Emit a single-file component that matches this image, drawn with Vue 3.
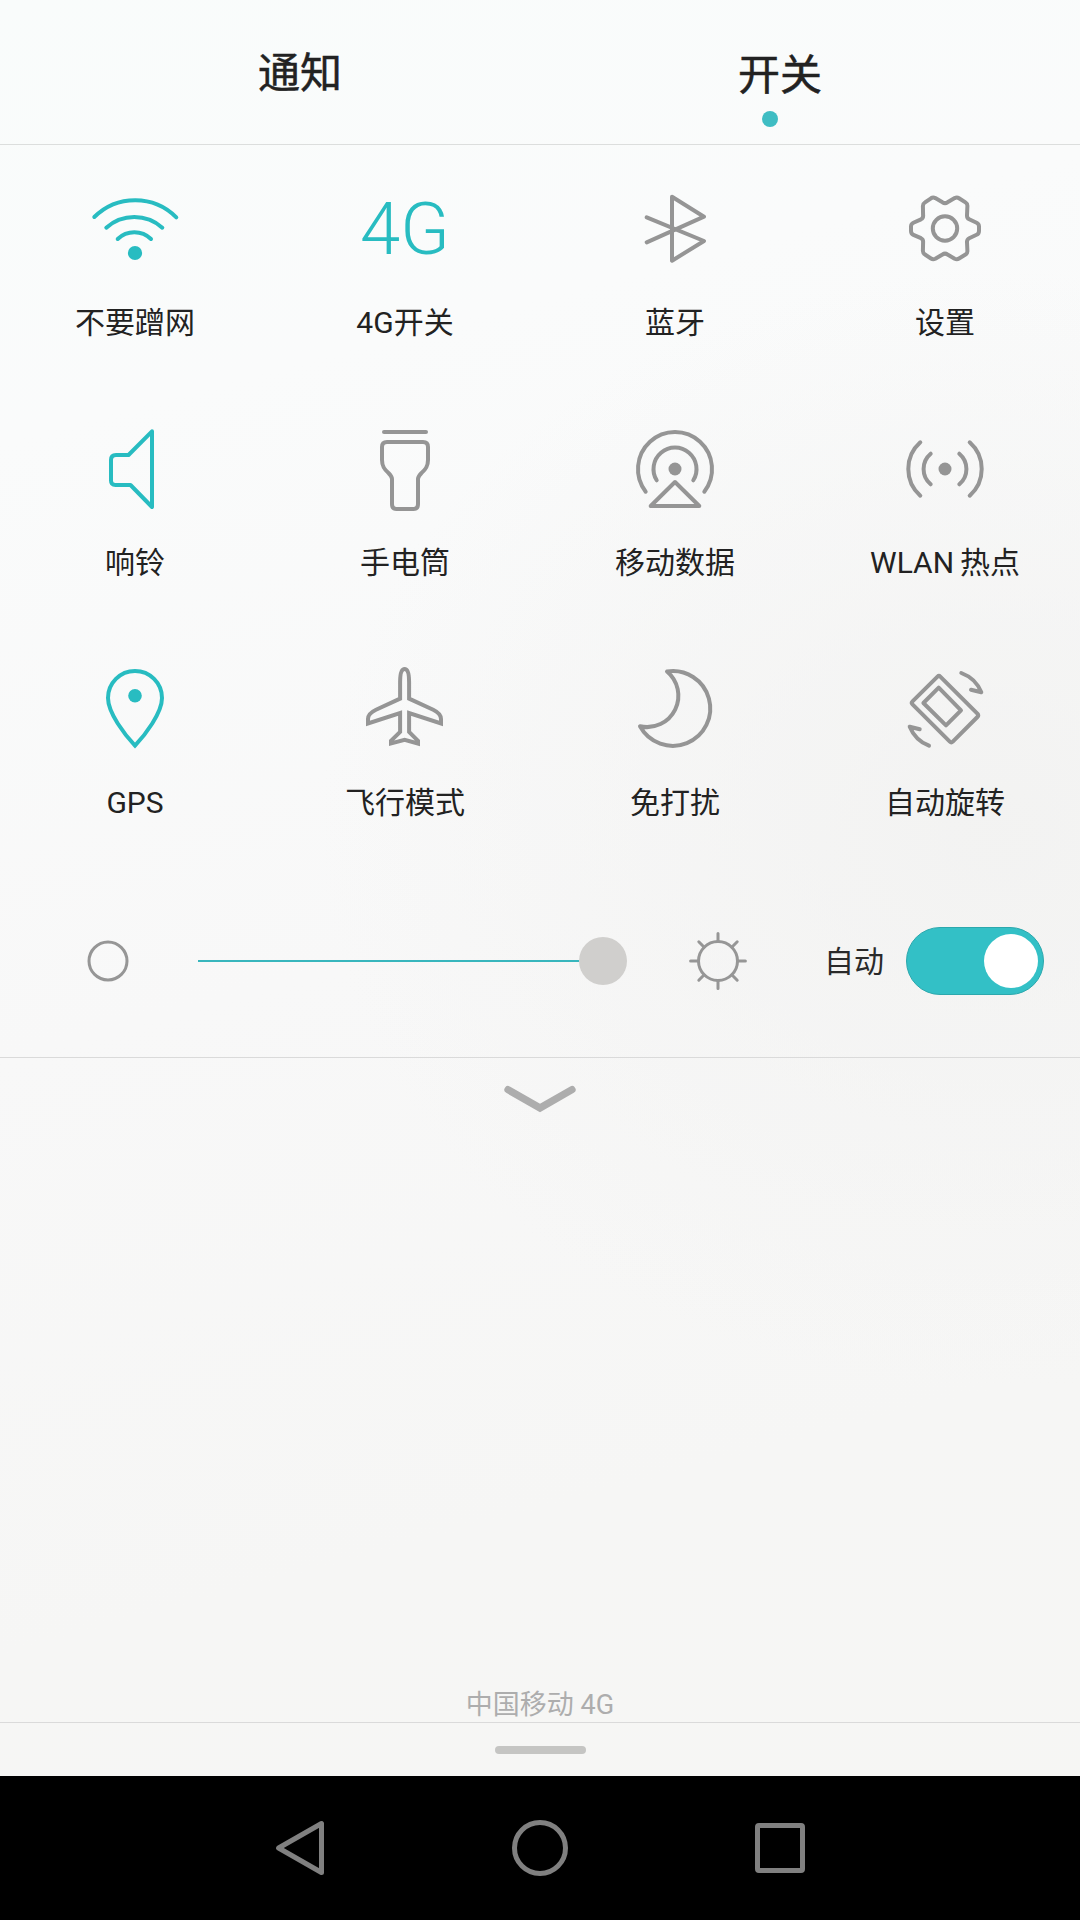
<script setup>
const tiles = [
  { id: 'wifi', label: '不要蹭网', on: true },
  { id: 'lte', label: '4G开关', on: true },
  { id: 'bluetooth', label: '蓝牙' },
  { id: 'settings', label: '设置' },
  { id: 'sound', label: '响铃', on: true },
  { id: 'torch', label: '手电筒' },
  { id: 'data', label: '移动数据' },
  { id: 'hotspot', label: 'WLAN 热点' },
  { id: 'gps', label: 'GPS', on: true },
  { id: 'airplane', label: '飞行模式' },
  { id: 'dnd', label: '免打扰' },
  { id: 'rotate', label: '自动旋转' },
]

const shapes = {
  wifi: {
    lines: ['M9.3 38A58 58 0 0 1 91.3 38.3', 'M21.3 48.7A42 42 0 0 1 77.3 48.7', 'M32.7 60A24 24 0 0 1 66 60'],
    dot: [50, 74, 7.1],
  },
  bluetooth: { lines: ['M21.7 38.3L79 62L47 81.7V17.7L79 37.7L21.7 63.3'] },
  settings: {
    lines: [
      'M16 47.5Q16 44.8 18.4 43.7L26 40.3Q28.3 39.2 28.1 36.5L27.9 27Q28 24.6 30 23.4L36 19.3Q38 18 40.3 19.1L47.5 23.3Q50 25 52.5 23.3L59.7 19.1Q62 18 64 19.3L70.5 23.4Q72.5 24.6 72.4 27L72 36.5Q71.9 39.2 74.2 40.3L81.6 43.7Q84 44.8 84 47.5V52Q84 54.7 81.6 55.8L74.2 59.2Q71.9 60.3 72 63L72.4 72Q72.5 74.4 70.5 75.5L64 79.5Q62 80.8 59.7 79.7L52.5 75.5Q50 73.8 47.5 75.5L40.3 79.7Q38 80.8 36 79.5L30 75.5Q28 74.4 27.9 72L28.1 63Q28.3 60.3 26 59.2L18.4 55.8Q16 54.7 16 52Z',
      'M62.2 49.5A12.2 12.2 0 1 1 37.8 49.5A12.2 12.2 0 1 1 62.2 49.5Z',
    ],
  },
  sound: { lines: ['M43.5 36H31Q26 36 26 41V61.5Q26 66 30.5 66H45.5L67 88V12.3Z'] },
  torch: {
    lines: [
      'M29 13H71',
      'M32 23H68Q73 23 73 28V41C73 48 70 51 66.5 54Q63 57.5 63 60V85Q63 90 58.5 90H41.5Q37 90 37 85V60Q37 57.5 33.5 54C30 51 27 48 27 41V28Q27 23 32 23Z',
    ],
  },
  data: {
    lines: ['M20.7 72.7A37 37 0 1 1 79.3 72.7', 'M31.7 61.3A21.5 21.5 0 1 1 68.3 61.3', 'M50 63L25.7 87H74.3Z'],
    dot: [50, 50, 6.5],
  },
  hotspot: {
    lines: [
      'M25.3 23.3A35.7 35.7 0 0 0 25.3 76.7',
      'M35.7 34.7A20 20 0 0 0 35.7 65.3',
      'M74.7 23.3A35.7 35.7 0 0 1 74.7 76.7',
      'M64.3 34.7A20 20 0 0 1 64.3 65.3',
    ],
    dot: [50, 50, 6.5],
  },
  gps: {
    lines: ['M50 86.6C40 76 23 54 23 39A27 27 0 0 1 77 39C77 54 60 76 50 86.6Z'],
    dot: [50, 36.7, 6.8],
    sharp: true,
  },
  airplane: {
    lines: [
      'M49.6 10C46.5 10 45.1 15 45.1 23V39.6L21 50.8Q13 54.6 13 60V64.5L45.1 54V73L36 81.8V84.5L49.6 80.8L63 84.5V81.8L54.1 73V54L86 64.5V60Q86 54.6 78.2 50.8L54.1 39.6V23C54.1 15 52.7 10 49.6 10Z',
    ],
    sharp: true,
  },
  dnd: { lines: ['M42 12.5A37.4 37.4 0 1 1 15 67.3A31.4 31.4 0 0 0 42 12.5Z'] },
  rotate: {
    lines: [
      'M42.5 17.6Q43.9 16.2 45.3 17.6L82.4 54.6Q84 56.4 82.4 58L57.8 82.6Q56.3 84 54.8 82.6L17.5 45.4Q16 43.9 17.5 42.4Z',
      'M43.7 28.7L28.4 44L51 66.3L66 51.3Z',
      'M66.3 14Q81 19.5 86.3 33.3L76 30.7',
      'M34 86.7Q20.5 81.5 14.7 67.7L24.7 70.3',
    ],
  },
}
</script>

<template>
  <div class="screen">
    <header class="tabs">
      <div class="tab notices">通知</div>
      <div class="tab switches">
        <span>开关</span>
        <i class="indicator"></i>
      </div>
    </header>

    <main class="grid">
      <div v-for="t in tiles" :key="t.id" class="tile" :class="{ on: t.on }">
        <div v-if="t.id === 'lte'" class="icon lte">4G</div>
        <svg v-else class="icon" :class="{ sharp: shapes[t.id].sharp }" viewBox="0 0 100 100">
          <path v-for="d in shapes[t.id].lines" :key="d" :d="d" />
          <circle
            v-if="shapes[t.id].dot"
            :cx="shapes[t.id].dot[0]"
            :cy="shapes[t.id].dot[1]"
            :r="shapes[t.id].dot[2]"
          />
        </svg>
        <div class="label">{{ t.label }}</div>
      </div>
    </main>

    <section class="brightness">
      <svg class="low" viewBox="0 0 44 44"><circle cx="22" cy="22" r="19" /></svg>
      <div class="slider">
        <div class="track"></div>
        <div class="thumb"></div>
      </div>
      <svg class="high" viewBox="0 0 60 60">
        <circle cx="30" cy="30" r="19.5" />
        <path d="M30 10.5V2.6M30 49.5V57.4M10.5 30H2.6M49.5 30H57.4M16.2 16.2L10.8 10.8M43.8 16.2L49.2 10.8M16.2 43.8L10.8 49.2M43.8 43.8L49.2 49.2" />
      </svg>
      <span class="auto">自动</span>
      <div class="toggle"><div class="knob"></div></div>
    </section>

    <div class="expand">
      <svg viewBox="0 0 80 30"><path d="M8 6.7L40 25L72 6.7" /></svg>
    </div>

    <div class="carrier">中国移动 4G</div>
    <div class="handle"><i></i></div>

    <nav class="navbar">
      <svg viewBox="0 0 60 60"><path d="M8.6 30L51.5 5.5V54.5Z" /></svg>
      <svg viewBox="0 0 60 60"><circle cx="30" cy="30" r="25.5" /></svg>
      <svg viewBox="0 0 60 60"><rect x="7.5" y="7.5" width="45" height="45" rx="1.5" /></svg>
    </nav>
  </div>
</template>

<style>
body {
  margin: 0;
}
</style>

<style scoped>
.screen {
  width: 1080px;
  height: 1920px;
  display: flex;
  flex-direction: column;
  overflow: hidden;
  font-family: Roboto, "Noto Sans CJK SC", sans-serif;
  color: #222;
  background:
    radial-gradient(ellipse 680px 560px at 1000px 830px, rgba(242, 242, 241, 0.9), rgba(245, 245, 244, 0) 100%),
    linear-gradient(165deg, #f9fcfb 0%, #fafbfb 20%, #f8f8f8 48%, #f6f6f5 75%, #f6f6f4 100%);
}
.tabs {
  box-sizing: border-box;
  height: 145px;
  flex: none;
  display: flex;
  padding: 0 60px;
  border-bottom: 1px solid #dcdedd;
}
.tab {
  flex: 1;
  display: flex;
  flex-direction: column;
  align-items: center;
  font-size: 42px;
  line-height: 60px;
  -webkit-text-stroke: 0.5px #222;
}
.notices {
  padding-top: 44px;
}
.switches {
  padding-top: 46px;
}
.indicator {
  width: 16px;
  height: 16px;
  margin: 5px 20px 0 0;
  border-radius: 50%;
  background: #3fbdc3;
}
.grid {
  flex: none;
  display: grid;
  grid-template-columns: repeat(4, 270px);
  grid-auto-rows: 240px;
  padding-top: 34px;
}
.tile {
  display: flex;
  flex-direction: column;
  align-items: center;
  color: #959595;
}
.tile.on {
  color: #28bcc1;
}
.icon {
  width: 100px;
  height: 100px;
  fill: none;
  stroke: currentColor;
  stroke-width: 4;
  stroke-linecap: round;
  stroke-linejoin: round;
}
.icon.sharp {
  stroke-linejoin: miter;
}
.icon circle {
  fill: currentColor;
  stroke: none;
}
.lte {
  text-align: center;
  font-size: 72.5px;
  font-weight: 300;
  line-height: 101px;
  white-space: nowrap;
}
.label {
  margin-top: 22px;
  font-size: 30px;
  line-height: 44px;
  word-spacing: -1.5px;
  color: #222;
  white-space: nowrap;
}
.brightness {
  box-sizing: border-box;
  height: 159px;
  flex: none;
  display: flex;
  align-items: center;
  padding: 0 36px 35px 86px;
  border-bottom: 1px solid #dadada;
}
.brightness svg {
  flex: none;
  fill: none;
  stroke: #969696;
  stroke-width: 3;
  stroke-linecap: round;
}
.low {
  width: 44px;
  height: 44px;
}
.slider {
  width: 429px;
  margin-left: 68px;
  display: flex;
  align-items: center;
}
.track {
  flex: 1;
  height: 2px;
  background: #38b6bd;
}
.thumb {
  width: 48px;
  height: 48px;
  border-radius: 50%;
  background: #d0cfcd;
}
.high {
  width: 60px;
  height: 60px;
  margin-left: 60.5px;
}
.auto {
  margin-left: 76.5px;
  padding-top: 2px;
  font-size: 30px;
  line-height: 44px;
  color: #2a2a2a;
}
.toggle {
  box-sizing: border-box;
  width: 138px;
  height: 68px;
  margin-left: auto;
  padding: 0 5px;
  display: flex;
  align-items: center;
  justify-content: flex-end;
  border: 1px solid #2ca8ad;
  border-radius: 34px;
  background: #33c0c6;
}
.knob {
  width: 54px;
  height: 54px;
  border-radius: 50%;
  background: #fff;
}
.expand {
  flex: 1;
  padding-top: 25px;
  text-align: center;
}
.expand svg {
  width: 80px;
  height: 30px;
  fill: none;
  stroke: #adadad;
  stroke-width: 7.3;
  stroke-linecap: round;
}
.carrier {
  flex: none;
  height: 36px;
  font-size: 27px;
  line-height: 38px;
  text-align: center;
  color: #adadad;
  border-bottom: 1px solid #dadada;
}
.handle {
  flex: none;
  height: 53px;
  display: flex;
  justify-content: center;
}
.handle i {
  width: 91px;
  height: 8px;
  margin-top: 23px;
  border-radius: 4px;
  background: #c5c5c3;
}
.navbar {
  flex: none;
  height: 144px;
  display: flex;
  align-items: center;
  justify-content: center;
  gap: 180px;
  background: #000;
}
.navbar svg {
  width: 60px;
  height: 60px;
  fill: none;
  stroke: #808080;
  stroke-width: 5;
  stroke-linejoin: round;
}
</style>
